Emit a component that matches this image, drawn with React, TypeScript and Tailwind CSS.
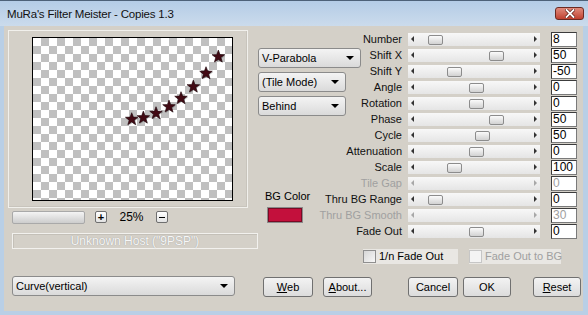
import React from "react";

type Row = { label: string; value: string; thumb?: number; disabled?: boolean };

const rows: Row[] = [
  { label: "Number", value: "8", thumb: 435 },
  { label: "Shift X", value: "50", thumb: 496 },
  { label: "Shift Y", value: "-50", thumb: 454 },
  { label: "Angle", value: "0", thumb: 476 },
  { label: "Rotation", value: "0", thumb: 476 },
  { label: "Phase", value: "50", thumb: 496 },
  { label: "Cycle", value: "50", thumb: 482 },
  { label: "Attenuation", value: "0", thumb: 476 },
  { label: "Scale", value: "100", thumb: 454 },
  { label: "Tile Gap", value: "0", disabled: true },
  { label: "Thru BG Range", value: "0", thumb: 435 },
  { label: "Thru BG Smooth", value: "30", disabled: true },
  { label: "Fade Out", value: "0", thumb: 476 },
];

// star centres, relative to the preview canvas
const stars = [
  [98.7, 81.3],
  [110.3, 79.7],
  [123, 75.3],
  [136, 68.7],
  [148, 60.3],
  [160.3, 48.7],
  [173, 35.3],
  [185.3, 18.7],
];

function starPoints(cx: number, cy: number, r: number, ri: number) {
  const pts: string[] = [];
  for (let i = 0; i < 10; i++) {
    const a = (Math.PI / 5) * i - Math.PI / 2;
    const rr = i % 2 === 0 ? r : ri;
    pts.push(`${(cx + rr * Math.cos(a)).toFixed(2)},${(cy + rr * Math.sin(a)).toFixed(2)}`);
  }
  return pts.join(" ");
}

function Dropdown({ label, className }: { label: string; className: string }) {
  return (
    <div
      className={`${className} h-[20px] flex items-center justify-between pl-[3px] pr-[6px] rounded-[3px] border border-[#8b8b8b] bg-gradient-to-b from-[#f4f4f4] to-[#dadada] text-[11px] text-black`}
    >
      <span>{label}</span>
      <span className="w-0 h-0 border-x-[4px] border-x-transparent border-t-[4px] border-t-black" />
    </div>
  );
}

function Button({ children, className }: { children: React.ReactNode; className: string }) {
  return (
    <div
      className={`${className} h-[20px] flex items-center justify-center rounded-[3px] border border-[#707070] bg-gradient-to-b from-[#f3f3f3] to-[#dcdcdc] text-[11px] text-black`}
    >
      {children}
    </div>
  );
}

function Slider({ row }: { row: Row }) {
  return (
    <div className="relative w-[132px] h-[13px] flex items-center justify-between px-[3px] bg-gradient-to-b from-[#f8f8f8] to-[#e5e5e5]">
      <span className={`w-0 h-0 border-y-[3px] border-y-transparent border-r-[3px] ${row.disabled ? "border-r-[#a8a8a8]" : "border-r-[#333]"}`} />
      <span className={`w-0 h-0 border-y-[3px] border-y-transparent border-l-[3px] ${row.disabled ? "border-l-[#a8a8a8]" : "border-l-[#333]"}`} />
      {row.thumb !== undefined && (
        <div
          className="absolute top-[2px] w-[15px] h-[10px] rounded-[2px] border border-[#8c8c8c] bg-gradient-to-b from-[#fbfbfb] to-[#d2d2d2]"
          style={{ left: row.thumb - 408 - 7 }}
        />
      )}
    </div>
  );
}

function Checkbox({ label, disabled, className }: { label: string; disabled?: boolean; className: string }) {
  return (
    <div className={`${className} h-[15px] flex items-center bg-[#e9e7e3]`}>
      <div
        className={`shrink-0 w-[13px] h-[13px] border ${disabled ? "border-[#c6c6c6] bg-[#f4f4f4]" : "border-[#8f8f8f] bg-gradient-to-br from-[#d6d6d6] to-[#f8f8f8]"}`}
      />
      <span className={`ml-[3px] whitespace-nowrap text-[11px] ${disabled ? "text-[#a0a0a0]" : "text-black"}`}>{label}</span>
    </div>
  );
}

export default function App() {
  return (
    <div className="w-[588px] h-[315px] flex flex-col bg-[#b9cfe6] border-t border-[#4d6178] pl-[4px] pr-[5px] pb-[4px] font-['Liberation_Sans',Arial,sans-serif] overflow-hidden">
      {/* title bar */}
      <div className="h-[25px] flex items-center bg-gradient-to-b from-[#b4cce6] to-[#cbdbec] -ml-[4px] -mr-[5px] pl-[7px] pr-[4px]">
        <span className="mt-[2px] text-[11.5px] tracking-[-0.2px] text-[#111]">MuRa's Filter Meister - Copies 1.3</span>
        <div className="ml-auto w-[29px] h-[13px] rounded-[3px] border border-[#6b2a22] bg-gradient-to-b from-[#e08a7c] to-[#c0402f] flex items-center justify-center">
          <svg width="10" height="9" viewBox="0 0 10 9">
            <path d="M1.5 1 L8.5 8 M8.5 1 L1.5 8" stroke="#5a1a12" strokeWidth="3.2" strokeLinecap="square" />
            <path d="M1.5 1 L8.5 8 M8.5 1 L1.5 8" stroke="#fff" strokeWidth="1.8" strokeLinecap="square" />
          </svg>
        </div>
      </div>

      {/* body */}
      <div className="flex-1 flex bg-[#d4d0c8] pt-[4px] pl-[4px] text-black">
        {/* left column */}
        <div className="w-[250px] flex flex-col">
          <div className="w-[240px] h-[178px] border border-[#f1f0ec] shadow-[inset_-1px_-1px_0_#c8c4bc]">
            <div className="ml-[23px] mt-[6px] w-[201px] h-[164px] border border-black">
              <div className="w-full h-full bg-[conic-gradient(#c0c0c0_25%,#ffffff_0_50%,#c0c0c0_0_75%,#ffffff_0)] bg-[length:16px_16px]">
                <svg width="199" height="162" viewBox="0 0 199 162">
                  {stars.map(([x, y], i) => (
                    <g key={i}>
                      <polygon points={starPoints(x + 0.8, y + 0.8, 6.8, 2.8)} fill="#000" opacity="0.25" />
                      <polygon points={starPoints(x, y, 6.6, 2.7)} fill="#420a14" stroke="#1c0308" strokeWidth="0.6" />
                    </g>
                  ))}
                </svg>
              </div>
            </div>
          </div>

          <div className="mt-[2px] h-[14px] flex items-center">
            <div className="ml-[4px] w-[73px] h-[13px] rounded-[2px] border border-[#a9a9a9] bg-gradient-to-b from-[#f4f4f4] to-[#cdcdcd]" />
            <div className="ml-[10px] w-[12px] h-[12px] rounded-[2px] border border-[#6f6f6f] bg-gradient-to-b from-white to-[#e2e2e2] flex items-center justify-center text-[11px] font-bold leading-none">
              +
            </div>
            <span className="w-[49px] text-center text-[12px]">25%</span>
            <div className="w-[12px] h-[12px] rounded-[2px] border border-[#6f6f6f] bg-gradient-to-b from-white to-[#e2e2e2] flex items-center justify-center">
              <span className="w-[6px] h-[1px] bg-black" />
            </div>
          </div>

          <div className="mt-[9px] ml-[4px] w-[246px] h-[16px] border border-[#f2f1ee] shadow-[inset_1px_1px_0_#c4c0b8] flex items-center justify-center text-[12px] text-[#f7f7f7] [text-shadow:0_0_1px_#8f8f8f]">
            Unknown Host ("9PSP")
          </div>

          <Dropdown label="Curve(vertical)" className="mt-[27px] ml-[4px] w-[223px]" />
        </div>

        {/* right area */}
        <div className="flex flex-col">
          <div className="flex">
            <div className="w-[104px] flex flex-col">
              <Dropdown label="V-Parabola" className="mt-[18px] w-[103px]" />
              <Dropdown label="(Tile Mode)" className="mt-[4px] w-[88px]" />
              <Dropdown label="Behind" className="mt-[4px] w-[88px]" />
              <span className="mt-[73px] ml-[7px] h-[14px] leading-[14px] text-[11px]">BG Color</span>
              <div className="mt-[4px] ml-[9px] w-[36px] h-[16px] border border-[#8a8a8a] p-px bg-[#7a0a24]">
                <div className="w-full h-full bg-[#c3103c]" />
              </div>
            </div>

            <div className="mt-[1px] flex flex-col">
              {rows.map((row) => (
                <div key={row.label} className="h-[16px] flex items-center">
                  <div className="w-[40px] flex justify-end">
                    <span className={`shrink-0 whitespace-nowrap text-[11px] ${row.disabled ? "text-[#a0a0a0]" : "text-[#111]"}`}>
                      {row.label}
                    </span>
                  </div>
                  <div className="ml-[6px]">
                    <Slider row={row} />
                  </div>
                  <div
                    className={`ml-[11px] w-[26px] h-[15px] bg-white border border-[#7a7a7a] border-t-[#3c3c3c] border-l-[#3c3c3c] pl-[1px] text-[12px] leading-[13px] ${row.disabled ? "text-[#a0a0a0]" : "text-black"}`}
                  >
                    {row.value}
                  </div>
                </div>
              ))}
            </div>
          </div>

          <div className="mt-[10px] ml-[105px] flex">
            <Checkbox label="1/n Fade Out" className="w-[95px]" />
            <Checkbox label="Fade Out to BG" disabled className="ml-[11px] w-[92px]" />
          </div>

          <div className="mt-[13px] flex">
            <Button className="ml-[5px] w-[50px]">
              <span className="underline">W</span>eb
            </Button>
            <Button className="ml-[10px] w-[49px]">
              <span className="underline">A</span>bout...
            </Button>
            <Button className="ml-[36px] w-[50px]">Cancel</Button>
            <Button className="ml-[5px] w-[48px]">OK</Button>
            <Button className="ml-[22px] w-[48px]">
              <span className="underline">R</span>eset
            </Button>
          </div>
        </div>
      </div>
    </div>
  );
}
